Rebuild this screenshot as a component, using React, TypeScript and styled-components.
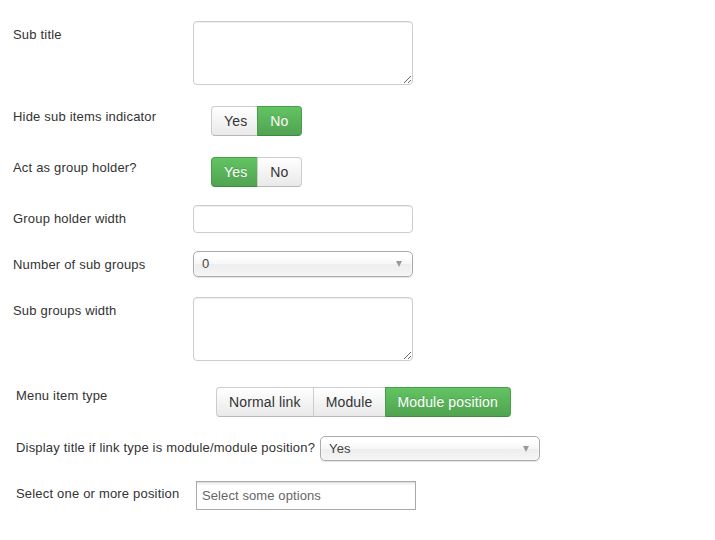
import React from "react";
import styled, { createGlobalStyle } from "styled-components";

const GlobalStyle = createGlobalStyle`
  html, body { margin: 0; padding: 0; background: #fff; }
  body {
    font-family: "Liberation Sans", Arial, Helvetica, sans-serif;
    font-size: 13px;
    color: #333;
  }
`;

const Page = styled.div`
  width: 715px;
  height: 540px;
  box-sizing: border-box;
  padding-top: 21px;
  overflow: hidden;
`;

const Section = styled.div<{ $left: number }>`
  display: flex;
  flex-direction: column;
  padding-left: ${(p) => p.$left}px;
`;

const Row = styled.div<{ $mt?: number }>`
  display: flex;
  align-items: flex-start;
  margin-top: ${(p) => p.$mt ?? 0}px;
`;

const Label = styled.label<{ $w?: number; $pt: number; $mr?: number }>`
  ${(p) => (p.$w ? `width: ${p.$w}px;` : "")}
  flex-shrink: 0;
  padding-top: ${(p) => p.$pt}px;
  margin-right: ${(p) => p.$mr ?? 0}px;
  font-size: 13px;
  line-height: 18px;
  letter-spacing: 0.19px;
  color: #333;
  white-space: nowrap;
`;

const TextArea = styled.textarea`
  box-sizing: border-box;
  width: 220px;
  height: 64px;
  margin: 0;
  padding: 4px 6px;
  border: 1px solid #ccc;
  border-radius: 4px;
  box-shadow: inset 0 1px 1px rgba(0, 0, 0, 0.075);
  font-family: inherit;
  font-size: 13px;
  resize: both;
  outline: none;
`;

const TextInput = styled.input<{ $square?: boolean; $h: number }>`
  box-sizing: border-box;
  width: 220px;
  height: ${(p) => p.$h}px;
  margin: 0;
  padding: 4px 5px;
  border: 1px solid ${(p) => (p.$square ? "#aaa" : "#ccc")};
  border-radius: ${(p) => (p.$square ? 0 : 4)}px;
  box-shadow: inset 0 1px 1px rgba(0, 0, 0, 0.075);
  background: ${(p) =>
    p.$square ? "linear-gradient(#eee 1%, #fff 15%)" : "#fff"};
  font-family: inherit;
  font-size: 13px;
  letter-spacing: 0.1px;
  color: #444;
  outline: none;
  &::placeholder {
    color: #666;
  }
`;

const Select = styled.div<{ $h: number }>`
  box-sizing: border-box;
  width: 220px;
  height: ${(p) => p.$h}px;
  display: flex;
  align-items: center;
  justify-content: space-between;
  padding: 0 10px 0 8px;
  border: 1px solid #aaa;
  border-radius: 5px;
  background: linear-gradient(#fff 20%, #f6f6f6 50%, #eee 52%, #f4f4f4 100%);
  box-shadow: inset 0 0 3px #fff, 0 1px 1px rgba(0, 0, 0, 0.1);
  font-size: 13px;
  line-height: 18px;
  letter-spacing: 0.15px;
  color: #444;
`;

const Arrow = styled.span`
  width: 0;
  height: 0;
  border-left: 3.5px solid transparent;
  border-right: 3.5px solid transparent;
  border-top: 6px solid #999;
`;

const Btn = styled.button<{ $active?: boolean }>`
  box-sizing: border-box;
  height: 30px;
  padding: 4px 12px;
  font-family: inherit;
  font-size: 14px;
  line-height: 20px;
  letter-spacing: 0.15px;
  cursor: pointer;
  position: relative;
  color: ${(p) => (p.$active ? "#fff" : "#333")};
  border: 1px solid ${(p) => (p.$active ? "#4a9e4a" : "#ccc")};
  border-bottom-color: ${(p) => (p.$active ? "#3d8b3d" : "#b8b8b8")};
  background: ${(p) =>
    p.$active
      ? "linear-gradient(#62c462, #51a351)"
      : "linear-gradient(#fff, #e9e9e9)"};
  box-shadow: ${(p) =>
    p.$active ? "none" : "inset 0 1px 0 rgba(255,255,255,.2)"};
  text-shadow: ${(p) => (p.$active ? "0 -1px 0 rgba(0,0,0,.15)" : "none")};
`;

const Group = styled.div<{ $ml?: number; $overlap: number }>`
  display: inline-flex;
  margin-left: ${(p) => p.$ml ?? 0}px;
  & > ${Btn} {
    margin: 0;
  }
  & > ${Btn} + ${Btn} {
    margin-left: -${(p) => p.$overlap}px;
  }
  & > ${Btn}:first-child {
    border-radius: 4px 0 0 4px;
  }
  & > ${Btn}:last-child {
    border-radius: 0 4px 4px 0;
  }
`;

export default function App() {
  return (
    <Page>
      <GlobalStyle />
      <Section $left={13}>
        <Row>
          <Label $w={180} $pt={5}>Sub title</Label>
          <TextArea />
        </Row>
        <Row $mt={21}>
          <Label $w={180} $pt={2}>Hide sub items indicator</Label>
          <Group $ml={18} $overlap={3}>
            <Btn>Yes</Btn>
            <Btn $active>No</Btn>
          </Group>
        </Row>
        <Row $mt={21}>
          <Label $w={180} $pt={2}>Act as group holder?</Label>
          <Group $ml={18} $overlap={3}>
            <Btn $active>Yes</Btn>
            <Btn>No</Btn>
          </Group>
        </Row>
        <Row $mt={18}>
          <Label $w={180} $pt={5}>Group holder width</Label>
          <TextInput $h={28} />
        </Row>
        <Row $mt={18}>
          <Label $w={180} $pt={5}>Number of sub groups</Label>
          <Select $h={26}>
            <span>0</span>
            <Arrow />
          </Select>
        </Row>
        <Row $mt={20}>
          <Label $w={180} $pt={5}>Sub groups width</Label>
          <TextArea />
        </Row>
      </Section>
      <Section $left={16}>
        <Row $mt={26}>
          <Label $w={200} $pt={0}>Menu item type</Label>
          <Group $overlap={1}>
            <Btn>Normal link</Btn>
            <Btn>Module</Btn>
            <Btn $active>Module position</Btn>
          </Group>
        </Row>
        <Row $mt={19}>
          <Label $pt={3} $mr={5}>
            Display title if link type is module/module position?
          </Label>
          <Select $h={25}>
            <span>Yes</span>
            <Arrow />
          </Select>
        </Row>
        <Row $mt={20}>
          <Label $w={180} $pt={4}>Select one or more position</Label>
          <TextInput $square $h={29} placeholder="Select some options" />
        </Row>
      </Section>
    </Page>
  );
}
